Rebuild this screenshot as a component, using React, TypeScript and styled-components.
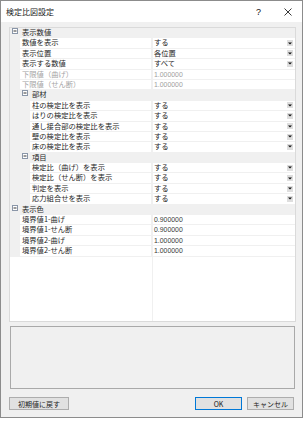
import React from 'react';
import styled, { createGlobalStyle } from 'styled-components';

const GlobalStyle = createGlobalStyle`
  html, body { margin: 0; padding: 0; background: #fff; }
  body { font-family: "Noto Sans CJK JP", "Liberation Sans", sans-serif; }
  * { box-sizing: border-box; }
`;

const Window = styled.div`
  width: 303px;
  height: 418px;
  border: 1px solid #8c8c8c;
  display: flex;
  flex-direction: column;
  background: #f0f0f0;
`;

const TitleBar = styled.div`
  height: 21px;
  background: #fff;
  display: flex;
  align-items: center;
  padding-left: 5px;
  font-size: 8px;
  color: #222;
`;

const Title = styled.div`
  flex: 1;
`;

const TitleButton = styled.div`
  width: 29px;
  height: 21px;
  display: flex;
  align-items: center;
  justify-content: center;
  font-family: "Liberation Sans", sans-serif;
  font-size: 9px;
  color: #111;
`;

const Body = styled.div`
  flex: 1;
  display: flex;
  flex-direction: column;
  padding: 5px 6px 0 8px;
`;

const Grid = styled.div`
  height: 295px;
  border: 1px solid #dadada;
  background: linear-gradient(to right, transparent 142px, #f0f0f0 142px, #f0f0f0 143px, transparent 143px), #fff;
  overflow: hidden;
`;

const Row = styled.div<{ $cat?: boolean }>`
  height: 10.4px;
  display: flex;
  align-items: stretch;
  border-bottom: 1px solid #f0f0f0;
  background: ${p => (p.$cat ? '#f0f0f0' : 'transparent')};
  font-size: 7.3px;
  line-height: 9.4px;
  white-space: nowrap;
`;

const NameCell = styled.div`
  width: 142px;
  display: flex;
  align-items: center;
  border-right: 1px solid #f0f0f0;
`;

const Margin = styled.div<{ $w: number }>`
  width: ${p => p.$w}px;
  align-self: stretch;
  background: #f0f0f0;
`;

const Label = styled.span<{ $disabled?: boolean }>`
  padding-left: 2px;
  color: ${p => (p.$disabled ? '#a3a3a3' : '#262626')};
`;

const CatToggle = styled.div<{ $indent: number }>`
  margin-left: ${p => p.$indent}px;
  width: 6px;
  height: 6px;
  display: flex;
  margin-right: 4px;
`;

const CatLabel = styled.span`
  color: #262626;
`;

const ValueCell = styled.div`
  flex: 1;
  display: flex;
  align-items: center;
  padding-left: 2px;
  padding-right: 2px;
`;

const Value = styled.span<{ $num?: boolean; $disabled?: boolean }>`
  flex: 1;
  font-family: ${p => (p.$num ? '"Liberation Sans", sans-serif' : 'inherit')};
  font-size: ${p => (p.$num ? '6.9px' : '7.3px')};
  color: ${p => (p.$disabled ? '#a0a0a0' : p.$num ? '#3a3a3a' : '#262626')};
`;

const DropButton = styled.div`
  width: 6px;
  height: 6px;
  background: #dedede;
  display: flex;
  align-items: center;
  justify-content: center;
`;

const Description = styled.div`
  margin: 4px 1px 0;
  height: 63px;
  border: 1px solid #a9a9a9;
  background: #f0f0f0;
`;

const ButtonRow = styled.div`
  margin-top: 8px;
  height: 13px;
  display: flex;
  gap: 5px;
  padding-right: 2px;
`;

const Button = styled.button<{ $w: number; $primary?: boolean }>`
  width: ${p => p.$w}px;
  height: 13px;
  padding: 0;
  background: #e1e1e1;
  border: 1px solid ${p => (p.$primary ? '#0078d7' : '#adadad')};
  font-family: "Noto Sans CJK JP", "Liberation Sans", sans-serif;
  font-size: 7px;
  color: #222;
  display: flex;
  align-items: center;
  justify-content: center;
`;

const Spacer = styled.div`
  flex: 1;
`;

type Item =
  | { kind: 'cat'; level: number; label: string }
  | { kind: 'prop'; level: number; label: string; value: string; dd?: boolean; disabled?: boolean; num?: boolean };

const items: Item[] = [
  { kind: 'cat', level: 1, label: '表示数値' },
  { kind: 'prop', level: 1, label: '数値を表示', value: 'する', dd: true },
  { kind: 'prop', level: 1, label: '表示位置', value: '各位置', dd: true },
  { kind: 'prop', level: 1, label: '表示する数値', value: 'すべて', dd: true },
  { kind: 'prop', level: 1, label: '下限値（曲げ）', value: '1.000000', disabled: true, num: true },
  { kind: 'prop', level: 1, label: '下限値（せん断）', value: '1.000000', disabled: true, num: true },
  { kind: 'cat', level: 2, label: '部材' },
  { kind: 'prop', level: 2, label: '柱の検定比を表示', value: 'する', dd: true },
  { kind: 'prop', level: 2, label: 'はりの検定比を表示', value: 'する', dd: true },
  { kind: 'prop', level: 2, label: '通し接合部の検定比を表示', value: 'する', dd: true },
  { kind: 'prop', level: 2, label: '壁の検定比を表示', value: 'する', dd: true },
  { kind: 'prop', level: 2, label: '床の検定比を表示', value: 'する', dd: true },
  { kind: 'cat', level: 2, label: '項目' },
  { kind: 'prop', level: 2, label: '検定比（曲げ）を表示', value: 'する', dd: true },
  { kind: 'prop', level: 2, label: '検定比（せん断）を表示', value: 'する', dd: true },
  { kind: 'prop', level: 2, label: '判定を表示', value: 'する', dd: true },
  { kind: 'prop', level: 2, label: '応力組合せを表示', value: 'する', dd: true },
  { kind: 'cat', level: 1, label: '表示色' },
  { kind: 'prop', level: 1, label: '境界値1-曲げ', value: '0.900000', num: true },
  { kind: 'prop', level: 1, label: '境界値1-せん断', value: '0.900000', num: true },
  { kind: 'prop', level: 1, label: '境界値2-曲げ', value: '1.000000', num: true },
  { kind: 'prop', level: 1, label: '境界値2-せん断', value: '1.000000', num: true },
];

const MinusBox = () => (
  <svg width="6" height="6" viewBox="0 0 6 6">
    <rect x="0.5" y="0.5" width="5" height="5" fill="#fff" stroke="#8a96a8" />
    <line x1="1.5" y1="3" x2="4.5" y2="3" stroke="#333" strokeWidth="1" />
  </svg>
);

const Arrow = () => (
  <svg width="4" height="3" viewBox="0 0 4 3">
    <path d="M0 0.5 L4 0.5 L2 2.5 Z" fill="#111" />
  </svg>
);

const CloseIcon = () => (
  <svg width="8" height="8" viewBox="0 0 8 8">
    <path d="M0.5 0.5 L7.5 7.5 M7.5 0.5 L0.5 7.5" stroke="#222" strokeWidth="0.9" />
  </svg>
);

export default function App() {
  return (
    <>
      <GlobalStyle />
      <Window>
        <TitleBar>
          <Title>検定比図設定</Title>
          <TitleButton>?</TitleButton>
          <TitleButton>
            <CloseIcon />
          </TitleButton>
        </TitleBar>
        <Body>
          <Grid>
            {items.map((it, i) =>
              it.kind === 'cat' ? (
                <Row key={i} $cat>
                  <CatToggle $indent={it.level === 1 ? 2 : 12}>
                    <MinusBox />
                  </CatToggle>
                  <CatLabel>{it.label}</CatLabel>
                </Row>
              ) : (
                <Row key={i}>
                  <NameCell>
                    <Margin $w={it.level * 10} />
                    <Label $disabled={it.disabled}>{it.label}</Label>
                  </NameCell>
                  <ValueCell>
                    <Value $num={it.num} $disabled={it.disabled}>
                      {it.value}
                    </Value>
                    {it.dd && (
                      <DropButton>
                        <Arrow />
                      </DropButton>
                    )}
                  </ValueCell>
                </Row>
              )
            )}
          </Grid>
          <Description />
          <ButtonRow>
            <Button $w={60}>初期値に戻す</Button>
            <Spacer />
            <Button $w={47} $primary>OK</Button>
            <Button $w={47}>キャンセル</Button>
          </ButtonRow>
        </Body>
      </Window>
    </>
  );
}
